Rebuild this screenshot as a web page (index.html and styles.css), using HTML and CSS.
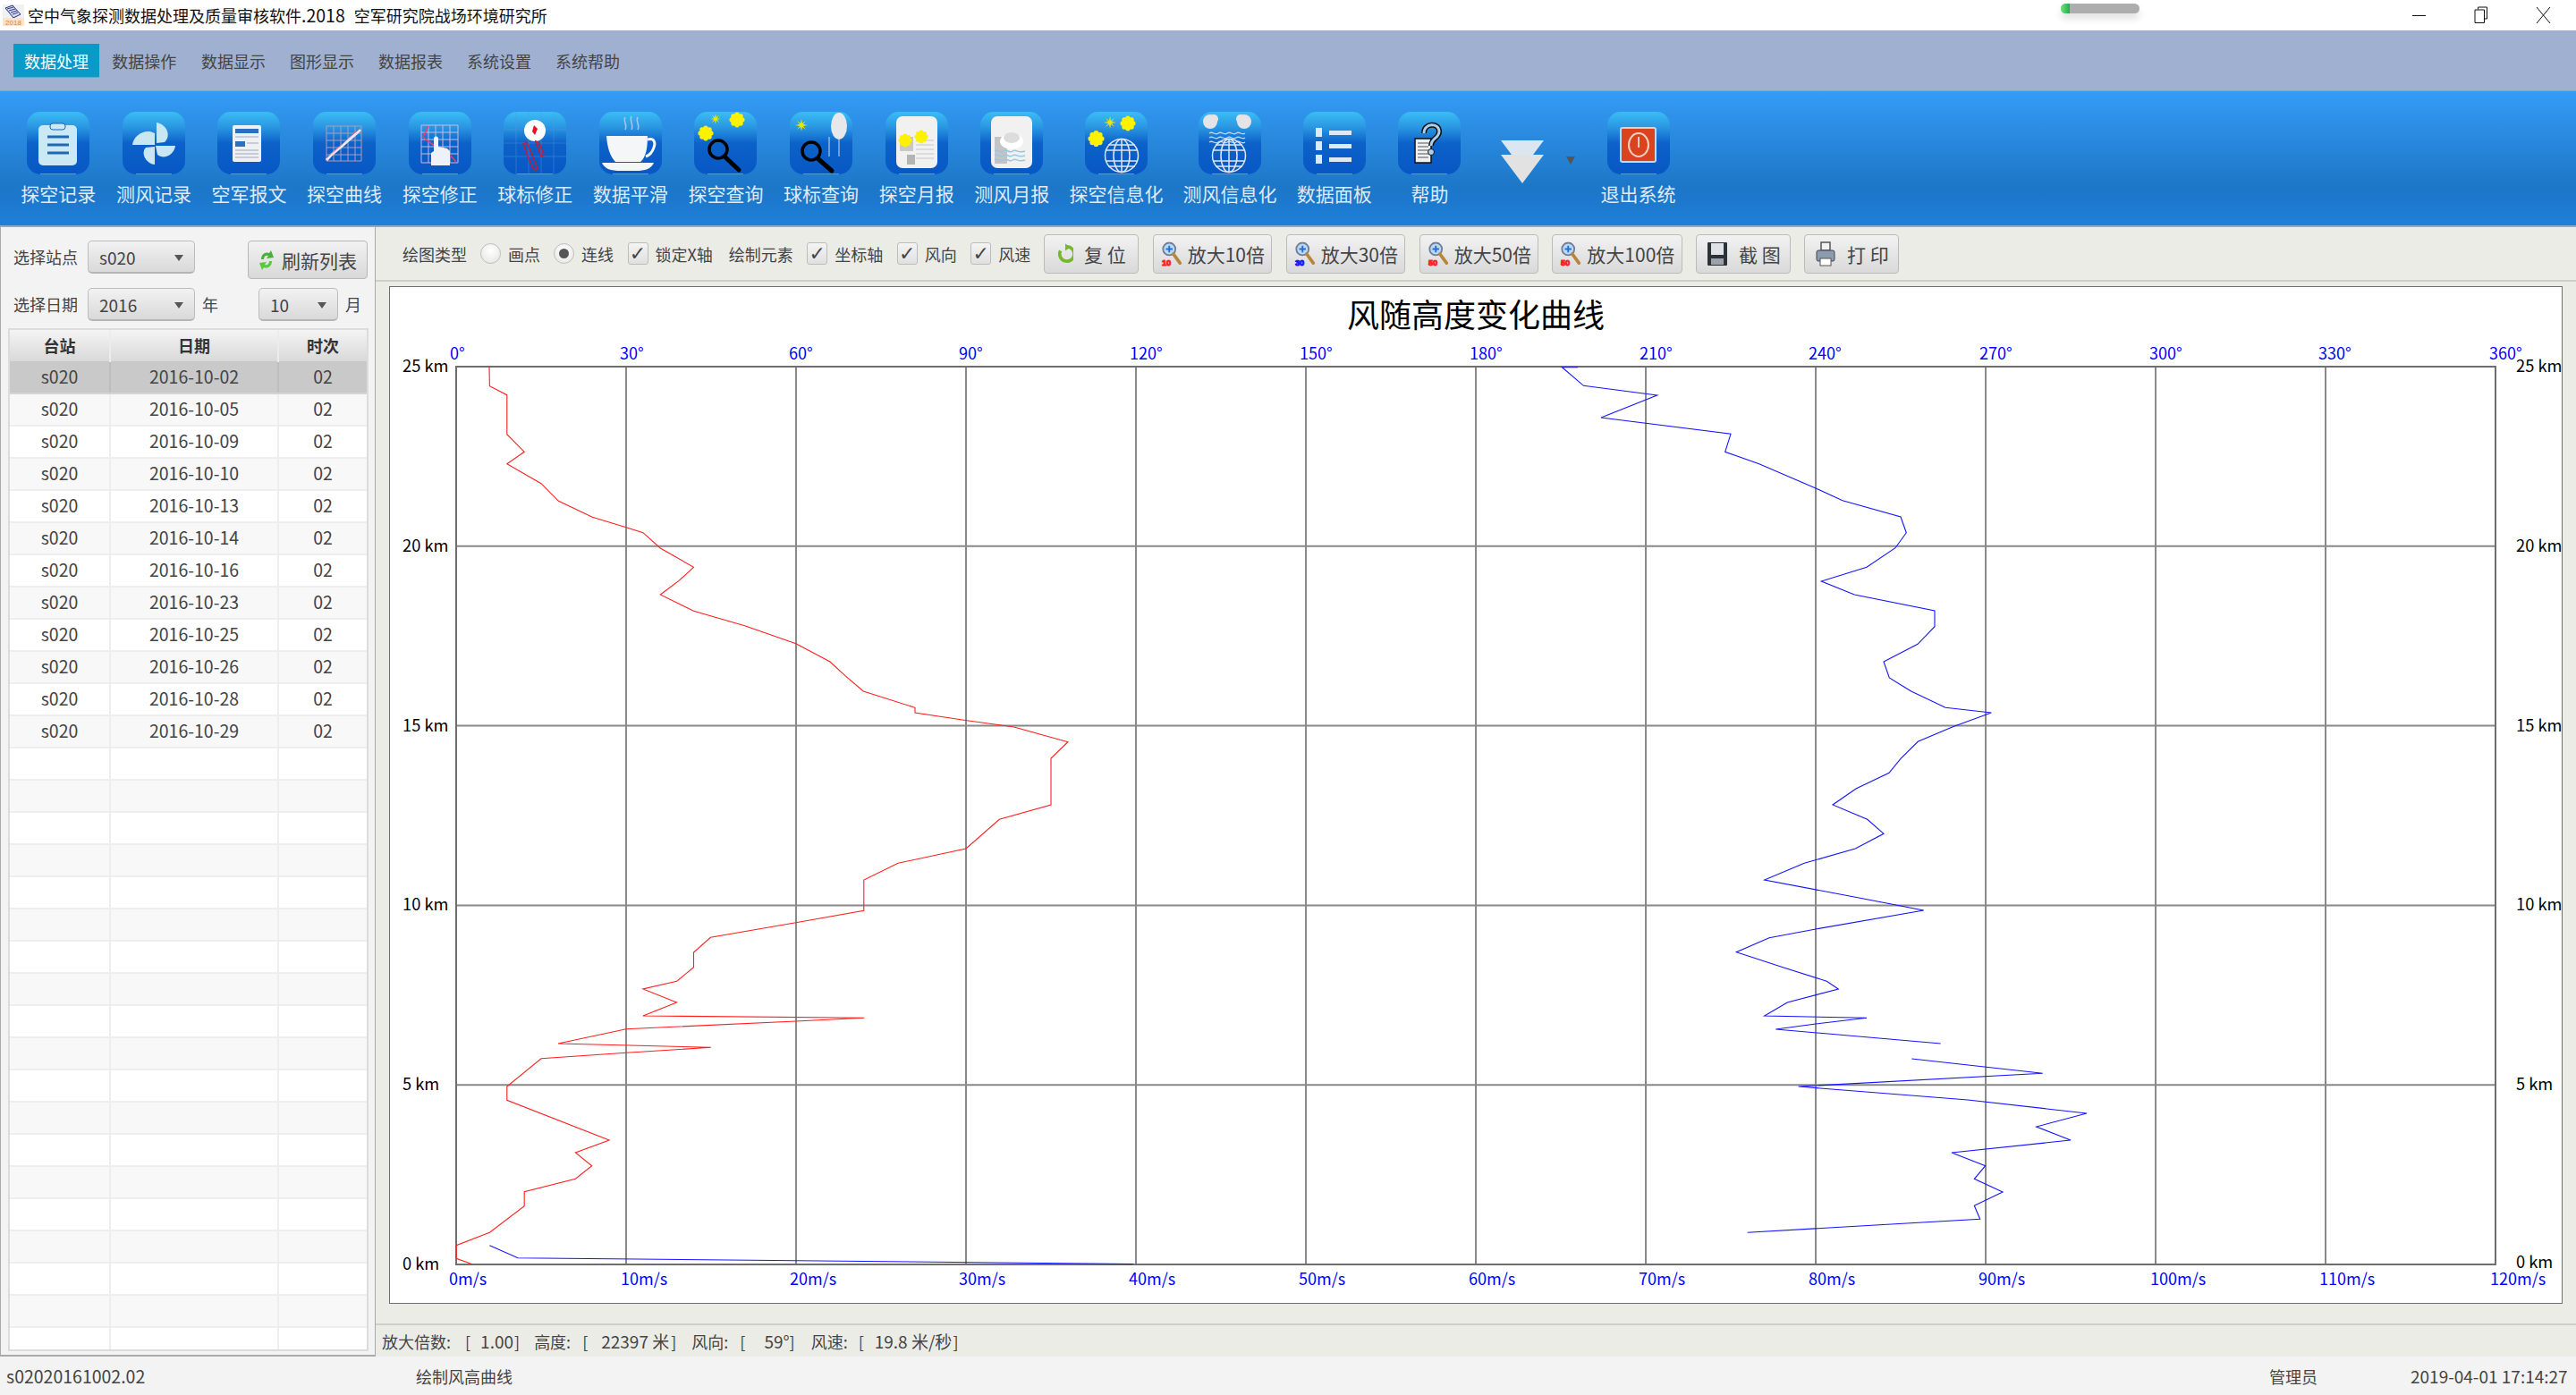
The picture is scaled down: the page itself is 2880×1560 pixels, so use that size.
FILE: index.html
```html
<!DOCTYPE html>
<html lang="zh">
<head>
<meta charset="utf-8">
<title>空中气象探测数据处理及质量审核软件</title>
<link rel="stylesheet" href="styles.css">
</head>
<body>
<svg class="defs" width="0" height="0">
  <defs>
    <linearGradient id="gi" x1="0" y1="0" x2="0" y2="1">
      <stop offset="0" stop-color="#3bbdf4"/><stop offset=".25" stop-color="#2a96e2"/><stop offset=".5" stop-color="#0c62c8"/><stop offset="1" stop-color="#0757c4"/>
    </linearGradient>
    <symbol id="tile" viewBox="0 0 70 70"><rect x="0" y="0" width="70" height="70" rx="15" fill="url(#gi)"/><path d="M15 69.5h40" stroke="#7ab7ea" stroke-width="1" opacity=".7"/></symbol>
    <symbol id="globe" viewBox="0 0 40 40"><g fill="none" stroke="#dfe6f2" stroke-width="1.5"><circle cx="20" cy="20" r="18.5"/><ellipse cx="20" cy="20" rx="9" ry="18.5"/><path d="M20 1.5v37M2 14h36M2 26h36M5 8h30M5 32h30"/></g></symbol>
    <symbol id="sun" viewBox="0 0 20 20"><g fill="#fff200"><circle cx="10" cy="10" r="7.5"/><circle cx="10" cy="3.5" r="3"/><circle cx="10" cy="16.500" r="3"/><circle cx="3.500" cy="10" r="3"/><circle cx="16.500" cy="10" r="3"/><circle cx="5.500" cy="5.500" r="3"/><circle cx="14.500" cy="5.500" r="3"/><circle cx="5.500" cy="14.500" r="3"/><circle cx="14.500" cy="14.500" r="3"/></g></symbol>
    <symbol id="star" viewBox="0 0 14 14"><path d="M7 0l1 5 4-3-3 4 5 1-5 1 3 4-4-3-1 5-1-5-4 3 3-4-5-1 5-1-3-4 4 3z" fill="#e8e800"/></symbol>
    <symbol id="zoomglass" viewBox="0 0 26 30"><circle cx="10" cy="9" r="7.500" fill="#bcd8f5" stroke="#6f7f96" stroke-width="2"/><path d="M10 5v8M6 9h8" stroke="#1f6fd8" stroke-width="2"/><path d="M15 15l8 11" stroke="#b8863a" stroke-width="4" stroke-linecap="round"/></symbol>
  </defs>
</svg>

<header class="titlebar">
  <svg class="appicon" viewBox="0 0 24 24" width="24" height="24" aria-hidden="true">
    <rect width="24" height="24" fill="#f1f1f1"/>
    <path d="M3 4l8-3 9 10-8 4z" fill="#cfd7ea" stroke="#27307c" stroke-width="1"/>
    <path d="M5 5l7-2M7 7l7-2M9 9l7-2M11 11l6-2" stroke="#27307c" stroke-width=".9"/>
    <rect y="15" width="24" height="9" fill="#fde3cc"/>
    <text x="12" y="23" class="appicon-text" text-anchor="middle">2018</text>
  </svg>
  <span class="apptitle">空中气象探测数据处理及质量审核软件<span class="ver">.2018</span></span><span class="apptitle org">空军研究院战场环境研究所</span>
  <div class="pill"><i></i></div>
  <div class="winctl">
    <svg width="16" height="16" viewBox="0 0 16 16"><path d="M0 8.500h15" stroke="#111" stroke-width="1"/></svg>
    <svg width="16" height="20" viewBox="0 0 16 20"><path d="M4.500 3.500V1h10v13H12M1 4h10.500v14.500H1z" fill="#fff" stroke="#111" stroke-width="1"/></svg>
    <svg width="17" height="20" viewBox="0 0 17 20"><path d="M1 1l15 18M16 1L1 19" stroke="#111" stroke-width="1"/></svg>
  </div>
</header>

<nav class="menubar">
  <span class="menu active">数据处理</span>
  <span class="menu">数据操作</span>
  <span class="menu">数据显示</span>
  <span class="menu">图形显示</span>
  <span class="menu">数据报表</span>
  <span class="menu">系统设置</span>
  <span class="menu">系统帮助</span>
</nav>

<section class="toolbar">
  <div class="tool"><svg class="ticon" viewBox="0 0 70 70"><use href="#tile" width="70" height="70"/><rect x="13" y="15" width="43" height="45" rx="5" fill="#cbe9f4"/><rect x="26" y="13" width="17" height="7" rx="3" fill="#cbe9f4" stroke="#1c62b0"/><path d="M23 28h24M23 37h24M23 46h24" stroke="#2168b3" stroke-width="3"/></svg><span>探空记录</span></div>
  <div class="tool"><svg class="ticon" viewBox="0 0 70 70"><use href="#tile" width="70" height="70"/><g fill="#c9e7f3"><path d="M38 35V12C49 14 55 26 47 34z"/><path d="M36 37H11C12 26 26 18 36 24z"/><path d="M37 38H59C58 48 46 54 39 48z"/><path d="M36 39V59C26 58 20 46 26 40z"/></g></svg><span>测风记录</span></div>
  <div class="tool"><svg class="ticon" viewBox="0 0 70 70"><use href="#tile" width="70" height="70"/><rect x="17" y="15" width="32" height="41" rx="2" fill="#eef0f4"/><rect x="20" y="19" width="26" height="5" fill="#2a6fc0"/><rect x="20" y="33" width="11" height="6" fill="#2a6fc0"/><path d="M20 28h26M33 35h13M20 43h26M20 47h26M20 51h26" stroke="#c8ccd4" stroke-width="2"/></svg><span>空军报文</span></div>
  <div class="tool"><svg class="ticon" viewBox="0 0 70 70"><use href="#tile" width="70" height="70"/><path d="M15 16h39v39H15zM23 16v39M31 16v39M39 16v39M47 16v39M15 24h39M15 32h39M15 40h39M15 48h39" fill="none" stroke="#b49ab8" stroke-width="1"/><path d="M15 54c8-10 14-12 20-18s10-8 18-16" fill="none" stroke="#e8e8f0" stroke-width="3"/><path d="M15 52c8-8 14-12 22-20s10-8 16-14" fill="none" stroke="#e46a86" stroke-width="1"/></svg><span>探空曲线</span></div>
  <div class="tool"><svg class="ticon" viewBox="0 0 70 70"><use href="#tile" width="70" height="70"/><path d="M14 15h41v42H14zM22 15v42M30 15v42M38 15v42M46 15v42M14 23h41M14 31h41M14 39h41M14 47h41" fill="none" stroke="#cdb8dc" stroke-width="1"/><path d="M22 16L16 28l10 8 18 10 9 10" fill="none" stroke="#f03a70" stroke-width="1.500"/><path d="M25 60v-14l3-2V30a2.500 2.500 0 0 1 5 0v9l10 2 3 3v16z" fill="#eef1f7"/></svg><span>探空修正</span></div>
  <div class="tool"><svg class="ticon" viewBox="0 0 70 70"><use href="#tile" width="70" height="70"/><path d="M0 20h70M0 35h70M0 50h70M14 0v70M28 0v70M42 0v70M56 0v70" stroke="#5c9ae0" stroke-width=".7" opacity=".6"/><circle cx="35" cy="21" r="12" fill="#fff"/><path d="M34 15l4 4-3 7-3-4z" fill="#e8101c"/><path d="M22 36l4-2 10 24 2 6-3 1-4-5zM36 33l4 2 5 13-3 2z" fill="none" stroke="#c01c3c" stroke-width="1.500"/></svg><span>球标修正</span></div>
  <div class="tool"><svg class="ticon" viewBox="0 0 70 70"><use href="#tile" width="70" height="70"/><path d="M29 6c-3 5 3 8 0 14M36 5c-3 5 3 9 0 15M43 6c-3 5 3 8 0 14" fill="none" stroke="#a6c7ea" stroke-width="1.500"/><path d="M8 27h46c0 14-2 24-8 29H18C12 50 9 40 8 27z" fill="#f4f6f8"/><path d="M54 31c8-2 9 4 7 9-2 6-6 9-9 10" fill="none" stroke="#f4f6f8" stroke-width="3"/><path d="M3 57h58c-3 7-10 9-20 9H24C13 66 6 64 3 57z" fill="#f4f6f8"/></svg><span>数据平滑</span></div>
  <div class="tool"><svg class="ticon" viewBox="0 0 70 70"><use href="#tile" width="70" height="70"/><use href="#star" x="18" y="2" width="12" height="12"/><use href="#sun" x="39" y="0" width="18" height="18"/><use href="#sun" x="3" y="15" width="20" height="18"/><circle cx="27" cy="42" r="10" fill="none" stroke="#000" stroke-width="3.500"/><path d="M34 50l16 15" stroke="#000" stroke-width="5" stroke-linecap="round"/></svg><span>探空查询</span></div>
  <div class="tool"><svg class="ticon" viewBox="0 0 70 70"><use href="#tile" width="70" height="70"/><use href="#star" x="6" y="8" width="14" height="14"/><ellipse cx="55" cy="16" rx="9" ry="15" fill="#e6e8ec"/><path d="M44 28v22M55 30v20" stroke="#d6d8de" stroke-width="1"/><circle cx="24" cy="44" r="10" fill="none" stroke="#000" stroke-width="3.500"/><path d="M31 52l16 14" stroke="#000" stroke-width="5" stroke-linecap="round"/></svg><span>球标查询</span></div>
  <div class="tool"><svg class="ticon" viewBox="0 0 70 70"><use href="#tile" width="70" height="70"/><rect x="12" y="5" width="46" height="58" rx="7" fill="#f1f1f1"/><path d="M34 32h20M34 37h20M34 42h20M34 47h20M34 52h20" stroke="#c6c6c6"/><rect x="16" y="28" width="15" height="16" fill="#c8c8c8"/><rect x="24" y="48" width="9" height="11" fill="#b4b4b4"/><use href="#sun" x="14" y="24" width="16" height="16"/><use href="#sun" x="32" y="20" width="16" height="16"/></svg><span>探空月报</span></div>
  <div class="tool"><svg class="ticon" viewBox="0 0 70 70"><use href="#tile" width="70" height="70"/><rect x="12" y="5" width="46" height="58" rx="7" fill="#f1f1f1"/><rect x="16" y="28" width="14" height="30" fill="#c4c4c4"/><ellipse cx="35" cy="33" rx="13" ry="9" fill="#fff"/><ellipse cx="35" cy="29" rx="9" ry="6" fill="#dcdcdc"/><path d="M16 44c4-3 6 3 10 0s6 3 10 0 6 3 14 0M16 49c4-3 6 3 10 0s6 3 10 0 6 3 14 0M16 54c4-3 6 3 10 0s6 3 10 0 6 3 14 0" fill="none" stroke="#9bc7de" stroke-width="1.500"/></svg><span>测风月报</span></div>
  <div class="tool wide"><svg class="ticon" viewBox="0 0 70 70"><use href="#tile" width="70" height="70"/><use href="#star" x="21" y="4" width="14" height="16"/><use href="#sun" x="39" y="3" width="18" height="20"/><use href="#sun" x="3" y="20" width="19" height="20"/><use href="#globe" x="21" y="29" width="40" height="40"/></svg><span>探空信息化</span></div>
  <div class="tool wide"><svg class="ticon" viewBox="0 0 70 70"><use href="#tile" width="70" height="70"/><g fill="#e4e4e6"><circle cx="13" cy="11" r="8"/><circle cx="51" cy="11" r="8"/><circle cx="17" cy="8" r="5"/><circle cx="47" cy="8" r="5"/></g><path d="M12 24c4-3 6 3 10 0s6 3 10 0 6 3 10 0 6 3 10 0M12 29c4-3 6 3 10 0s6 3 10 0 6 3 10 0 6 3 10 0M12 34c4-3 6 3 10 0s6 3 10 0 6 3 10 0 6 3 10 0" fill="none" stroke="#bad6f0" stroke-width="1.300"/><use href="#globe" x="14" y="29" width="40" height="40"/></svg><span>测风信息化</span></div>
  <div class="tool"><svg class="ticon" viewBox="0 0 70 70"><use href="#tile" width="70" height="70"/><g fill="#dfe9f6"><rect x="14" y="18" width="7" height="10"/><rect x="14" y="33" width="7" height="10"/><rect x="14" y="48" width="7" height="10"/><rect x="29" y="21" width="25" height="5"/><rect x="29" y="36" width="25" height="5"/><rect x="29" y="51" width="25" height="5"/></g></svg><span>数据面板</span></div>
  <div class="tool"><svg class="ticon" viewBox="0 0 70 70"><use href="#tile" width="70" height="70"/><rect x="19" y="30" width="18" height="27" fill="#eef0f2" stroke="#111" stroke-width="1.500"/><path d="M22 35h12M22 39h12M22 43h12M22 47h12M22 51h12" stroke="#555"/><path d="M29 24c0-12 17-12 17-2 0 8-9 7-9 16" fill="none" stroke="#111" stroke-width="6"/><path d="M29 24c0-12 17-12 17-2 0 8-9 7-9 16" fill="none" stroke="#a9d0ee" stroke-width="3"/><circle cx="37" cy="45" r="3.500" fill="#a9d0ee" stroke="#111"/></svg><span>帮助</span></div>
  <div class="arrows">
    <svg viewBox="0 0 48 48" width="48" height="48"><path d="M0 0h48L24 32z" fill="#dbe6f0"/><path d="M0 16h48L24 48z" fill="#e2e2e2"/></svg>
    <i class="dropcaret"></i>
  </div>
  <div class="tool"><svg class="ticon" viewBox="0 0 70 70"><use href="#tile" width="70" height="70"/><rect x="15" y="18" width="39" height="38" rx="2" fill="#d9431d" stroke="#c9d6de" stroke-width="2"/><ellipse cx="35" cy="37" rx="11" ry="13" fill="none" stroke="#f4cfc3" stroke-width="2"/><path d="M35 28v12" stroke="#f4cfc3" stroke-width="2"/></svg><span>退出系统</span></div>
</section>

<main class="main">
  <aside class="side">
    <div class="side-row first">
      <span class="lbl">选择站点</span>
      <span class="combo">s020</span>
      <button class="refresh"><svg viewBox="0 0 18 24" width="18" height="24"><path d="M3 11C3 5 8 2 12 4l2-3 3 8-8 1 2-3C8 6 6 8 6 11z" fill="#3cb92c"/><path d="M15 13c0 6-5 9-9 7l-2 3-3-8 8-1-2 3c3 1 5-1 5-4z" fill="#58c83c"/></svg>刷新列表</button>
    </div>
    <div class="side-row second">
      <span class="lbl">选择日期</span>
      <span class="combo">2016</span>
      <span class="unit">年</span>
      <span class="combo short">10</span>
      <span class="unit tail">月</span>
    </div>
    <div class="tablewrap">
      <table class="grid">
        <colgroup><col class="c1"><col class="c2"><col class="c3"></colgroup>
        <thead><tr><th>台站</th><th>日期</th><th>时次</th></tr></thead>
        <tbody>
          <tr class="sel"><td>s020</td><td>2016-10-02</td><td>02</td></tr>
          <tr><td>s020</td><td>2016-10-05</td><td>02</td></tr>
          <tr><td>s020</td><td>2016-10-09</td><td>02</td></tr>
          <tr><td>s020</td><td>2016-10-10</td><td>02</td></tr>
          <tr><td>s020</td><td>2016-10-13</td><td>02</td></tr>
          <tr><td>s020</td><td>2016-10-14</td><td>02</td></tr>
          <tr><td>s020</td><td>2016-10-16</td><td>02</td></tr>
          <tr><td>s020</td><td>2016-10-23</td><td>02</td></tr>
          <tr><td>s020</td><td>2016-10-25</td><td>02</td></tr>
          <tr><td>s020</td><td>2016-10-26</td><td>02</td></tr>
          <tr><td>s020</td><td>2016-10-28</td><td>02</td></tr>
          <tr><td>s020</td><td>2016-10-29</td><td>02</td></tr>
          <tr><td></td><td></td><td></td></tr><tr><td></td><td></td><td></td></tr><tr><td></td><td></td><td></td></tr><tr><td></td><td></td><td></td></tr>
          <tr><td></td><td></td><td></td></tr><tr><td></td><td></td><td></td></tr><tr><td></td><td></td><td></td></tr><tr><td></td><td></td><td></td></tr>
          <tr><td></td><td></td><td></td></tr><tr><td></td><td></td><td></td></tr><tr><td></td><td></td><td></td></tr><tr><td></td><td></td><td></td></tr>
          <tr><td></td><td></td><td></td></tr><tr><td></td><td></td><td></td></tr><tr><td></td><td></td><td></td></tr><tr><td></td><td></td><td></td></tr>
          <tr><td></td><td></td><td></td></tr><tr><td></td><td></td><td></td></tr><tr><td></td><td></td><td></td></tr>
        </tbody>
      </table>
    </div>
  </aside>

  <div class="content">
    <div class="controls">
      <span class="ctl">绘图类型</span>
      <span class="radio"></span><span class="ctl t">画点</span>
      <span class="radio on"></span><span class="ctl t">连线</span>
      <span class="check">✓</span><span class="ctl t">锁定X轴</span>
      <span class="ctl group">绘制元素</span>
      <span class="check">✓</span><span class="ctl t">坐标轴</span>
      <span class="check">✓</span><span class="ctl t">风向</span>
      <span class="check">✓</span><span class="ctl t">风速</span>
      <button class="btn w106"><svg viewBox="0 0 20 26" width="18" height="26"><path d="M12 4a9 9 0 1 1-8 5" fill="none" stroke="#76b82a" stroke-width="4"/><path d="M10 0v9l6-4z" fill="#76b82a"/></svg><span class="sp">复 位</span></button>
      <button class="btn w133"><svg viewBox="0 0 26 30" width="24" height="30"><use href="#zoomglass" width="26" height="30"/><text x="1" y="29" class="mini red">10</text></svg>放大10倍</button>
      <button class="btn w133"><svg viewBox="0 0 26 30" width="24" height="30"><use href="#zoomglass" width="26" height="30"/><text x="1" y="29" class="mini blue">30</text></svg>放大30倍</button>
      <button class="btn w133"><svg viewBox="0 0 26 30" width="24" height="30"><use href="#zoomglass" width="26" height="30"/><text x="1" y="29" class="mini red">50</text></svg>放大50倍</button>
      <button class="btn w146"><svg viewBox="0 0 26 30" width="24" height="30"><use href="#zoomglass" width="26" height="30"/><text x="1" y="29" class="mini red">50</text></svg>放大100倍</button>
      <button class="btn w106"><svg viewBox="0 0 24 28" width="24" height="28"><rect x="1" y="1" width="22" height="26" rx="1" fill="#2c3238"/><rect x="5" y="2" width="14" height="13" fill="#dfe3e8"/><rect x="5" y="19" width="14" height="7" fill="#9aa2aa"/></svg><span class="sp">截 图</span></button>
      <button class="btn w106"><svg viewBox="0 0 24 30" width="24" height="30"><rect x="7" y="2" width="10" height="9" fill="#f2f2f2" stroke="#555" stroke-width="1.500"/><rect x="2" y="11" width="20" height="12" rx="2" fill="#8d9bb0" stroke="#444"/><rect x="6" y="20" width="12" height="8" fill="#fff" stroke="#555"/></svg><span class="sp">打 印</span></button>
    </div>

    <div class="plotarea">
      <svg class="plot" viewBox="435 320 2430 1138" width="2430" height="1138">
        <text x="1650" y="366" text-anchor="middle" class="ptitle">风随高度变化曲线</text>

        <g class="grid-v">
          <path d="M700 410V1414M890 410V1414M1080 410V1414M1270 410V1414M1460 410V1414M1650 410V1414M1840 410V1414M2030 410V1414M2220 410V1414M2410 410V1414M2600 410V1414"/>
        </g>
        <g class="grid-h">
          <path d="M510 610.800H2790M510 811.600H2790M510 1012.400H2790M510 1213.200H2790"/>
        </g>
        <rect x="510" y="410" width="2280" height="1004" class="axis"/>

        <polyline class="red" points="547,410 547.400,431.700 566.800,441.700 566.800,485.700 586.200,505.300 566.800,518.700 605,540.700 624.500,560.300 662.200,578.300 700,589.700 718.900,595.700 738.300,613 775.500,634.300 758.700,649.700 738.300,665 775.500,683.300 832.600,699.700 889.800,719.700 928,740 944.900,755.700 965.300,773 1023,791.300 1023,797 1077.600,805.300 1133.700,813 1193.900,829.700 1175,848 1175,900 1117.300,916.300 1080,949 1004,965.300 965.800,984 965.800,1018.300 889.800,1031.700 794.400,1048.300 775.500,1065 775.500,1081.700 756.600,1097.300 718.900,1106 756.600,1121 718.900,1136 966.300,1138.300 889.800,1142 700,1150.700 624,1167 794.900,1171.300 700,1177.300 605,1183.700 566.800,1215 566.800,1230.300 681.100,1275 643.400,1289 661.700,1303.700 643.400,1318.300 586.200,1332.700 586.200,1348.700 547.400,1378.300 510.200,1392.700 510.200,1407.300 528,1413.700"/>

        <polyline class="blue" points="1764,410.700 1746.400,410.700 1770.500,431.300 1852.700,442 1790,467 1935,485.300 1928.700,505.300 1966.700,518.700 2030,546 2060,559.700 2125,578 2131.300,595.700 2119,612.700 2087,634.300 2036.300,650 2073.300,665 2163,683 2163,700.700 2144,720.300 2106,740 2112.300,758 2136.700,773 2175,791.300 2226.300,797 2183.300,812.700 2144.300,829.300 2125,848.300 2112,864.300 2075,882 2049,900 2087.700,916.300 2106,932.300 2074.300,949 2017.300,965.300 1972.700,984 2074.300,1003.300 2150.700,1018 2030,1039 1978,1048.700 1941.300,1064.700 1993.300,1081.700 2042.300,1097.300 2055.300,1106 1998.300,1121 1972.700,1136 2087,1138.300 2030,1145 1985.300,1151 2169.700,1167"/>
        <polyline class="blue" points="2137.300,1184 2283.700,1200.300 2010.700,1215 2200,1230 2333,1245 2276.700,1260 2315,1275 2182,1289 2219.700,1303.700 2207.300,1318.300 2239,1333 2207.300,1348.300 2213.700,1363.300 1953.700,1378.300"/>
        <polyline class="blue" points="547.400,1392.700 579,1406.700 1267,1413.500"/>

        <g class="lb">
          <text x="503" y="402">0°</text><text x="693" y="402">30°</text><text x="882" y="402">60°</text><text x="1072" y="402">90°</text>
          <text x="1263" y="402">120°</text><text x="1453" y="402">150°</text><text x="1643" y="402">180°</text><text x="1833" y="402">210°</text>
          <text x="2022" y="402">240°</text><text x="2213" y="402">270°</text><text x="2403" y="402">300°</text><text x="2592" y="402">330°</text><text x="2783" y="402">360°</text>
          <text x="502" y="1437">0m/s</text><text x="694" y="1437">10m/s</text><text x="883" y="1437">20m/s</text><text x="1072" y="1437">30m/s</text>
          <text x="1262" y="1437">40m/s</text><text x="1452" y="1437">50m/s</text><text x="1642" y="1437">60m/s</text><text x="1832" y="1437">70m/s</text>
          <text x="2022" y="1437">80m/s</text><text x="2212" y="1437">90m/s</text><text x="2404" y="1437">100m/s</text><text x="2593" y="1437">110m/s</text><text x="2784" y="1437">120m/s</text>
        </g>
        <g class="km">
          <text x="450" y="416">25 km</text><text x="450" y="617">20 km</text><text x="450" y="818">15 km</text><text x="450" y="1018">10 km</text><text x="450" y="1219">5 km</text><text x="450" y="1420">0 km</text>
          <text x="2813" y="416">25 km</text><text x="2813" y="617">20 km</text><text x="2813" y="818">15 km</text><text x="2813" y="1018">10 km</text><text x="2813" y="1219">5 km</text><text x="2813" y="1418">0 km</text>
        </g>
      </svg>
    </div>

    <div class="info">
      <span class="f1">放大倍数:</span><span class="f2">[</span><span class="f3 n">1.00</span><span class="f4">]</span>
      <span class="f5">高度:</span><span class="f6">[</span><span class="f7 n">22397 米</span><span class="f8">]</span>
      <span class="f9">风向:</span><span class="f10">[</span><span class="f11 n">59°</span><span class="f12">]</span>
      <span class="f13">风速:</span><span class="f14">[</span><span class="f15 n">19.8 米/秒</span><span class="f16">]</span>
    </div>
  </div>
</main>

<footer class="statusbar">
  <span class="s1">s02020161002.02</span>
  <span class="s2">绘制风高曲线</span>
  <span class="s3">管理员</span>
  <span class="s4">2019-04-01 17:14:27</span>
</footer>
</body>
</html>
```
FILE: styles.css
```css
* { box-sizing: border-box; }
html, body { margin: 0; padding: 0; }
body {
  width: 2880px;
  height: 1560px;
  overflow: hidden;
  display: flex;
  flex-direction: column;
  font-family: "Noto Sans CJK SC", "Noto Sans", sans-serif;
  font-size: 18px;
  color: #444;
  background: #ecece7;
}
.defs { position: absolute; }

/* title bar */
.titlebar { height: 34px; background: #fff; display: flex; align-items: center; padding-left: 3px; position: relative; flex: none; }
.appicon { flex: none; margin-top: 0; }
.appicon-text { font: 8px "Liberation Sans", sans-serif; fill: #f07a2a; }
.apptitle { margin-left: 4px; color: #111; line-height: 34px; white-space: nowrap; }
.apptitle.org { margin-left: 10px; }
.ver { font-size: 19.500px; }
.pill { position: absolute; left: 2304px; top: 4px; width: 88px; height: 11px; border-radius: 6px; background: #adadad; box-shadow: 0 6px 8px rgba(0,0,0,.12); overflow: hidden; }
.pill i { display: block; width: 10px; height: 100%; background: linear-gradient(90deg, #6ee27e, #1fae4c); }
.winctl { margin-left: auto; display: flex; align-items: center; padding-right: 28px; gap: 53px; }
.winctl svg { display: block; }

/* menu */
.menubar { height: 68px; background: #a0b0d0; border-bottom: 1px solid #8aa4cc; display: flex; align-items: flex-start; padding: 15px 0 0 15px; flex: none; }
.menu { width: 99px; height: 38px; line-height: 38px; text-align: center; white-space: nowrap; color: #444; margin-right: 0; flex: none; }
.menu.active { width: 96px; margin-right: 0; background: #0a9ac8; border-bottom: 1px solid #55add0; color: #f4fbff; }
.menu:nth-child(2) { width: 100.500px; }

/* icon toolbar */
.toolbar {
  height: 152px;
  flex: none;
  display: flex;
  padding-left: 12px;
  background: linear-gradient(#359cf7 0, #2d8fe6 35px, #1d77c8 106px, #1c78cc 120px, #1f7fd8 100%);
  border-bottom: 2px solid #8fa9c6;
}
.tool { width: 106.6px; flex: none; display: flex; flex-direction: column; align-items: center; padding-top: 23px; color: #dfeaf5; font-size: 21px; line-height: 30px; white-space: nowrap; }
.tool.wide { width: 127px; }
.tool span { margin-top: 6px; }
.ticon { width: 70px; height: 70px; display: block; flex: none; }
.arrows { width: 126.500px; flex: none; display: flex; align-items: flex-start; padding: 55px 0 0 26px; }
.dropcaret { width: 0; height: 0; margin: 18px 0 0 25px; border: 5px solid transparent; border-top: 9px solid #555; border-bottom: 0; }

/* main */
.main { flex: 1; min-height: 0; display: flex; }
.side { width: 420px; flex: none; background: #f3f3f3; border-left: 1px solid #aaa; border-right: 1px solid #aaa; border-bottom: 2px solid #aaa; }
.side-row { display: flex; align-items: flex-start; padding-left: 14px; }
.side-row.first { margin-top: 15px; height: 43px; }
.side-row.second { margin-top: 10px; height: 37px; }
.lbl { width: 73px; height: 37px; line-height: 37px; white-space: nowrap; margin-right: 10px; flex: none; }
.combo { width: 120px; height: 37px; line-height: 35px; padding-left: 12px; font-size: 19px; flex: none; border: 1px solid #bdbdbd; border-bottom: 2px solid #b5b5b5; border-radius: 5px; background: linear-gradient(#f2f2f2, #d9d9d9); position: relative; }
.combo::after { content: ""; position: absolute; right: 12px; top: 15px; border: 5.500px solid transparent; border-top: 7px solid #555; border-bottom: 0; }
.combo.short { width: 89px; margin-left: 19px; }
.unit { width: 44px; line-height: 37px; margin-left: 8px; flex: none; }
.unit.tail { width: 24px; }
.refresh { width: 134px; height: 43px; margin-left: 59px; padding: 0; flex: none; display: flex; align-items: center; justify-content: center; gap: 8px; font: inherit; font-size: 21px; color: #444; border: 1px solid #b8b8b8; border-radius: 4px; background: linear-gradient(#f2f2f2, #d8d8d8); }

.tablewrap { margin: 8px 0 0 8px; width: 403px; height: 1144px; border: 2px solid #dcdcdc; overflow: hidden; background: #fff; }
.grid { border-collapse: collapse; table-layout: fixed; width: 400px; }
.c1 { width: 112px; } .c2 { width: 188px; } .c3 { width: 100px; }
.grid th { height: 35px; padding: 0; font-weight: 700; color: #333; background: linear-gradient(#f4f4f4, #d9d9d9); border-right: 2px solid #ececec; border-bottom: 1px solid #c8c8c8; line-height: 28px; }
.grid td { height: 36px; padding: 0 0 2px; font-size: 19.500px; text-align: center; border-right: 2px solid #eee; border-bottom: 2px solid #eee; line-height: 28px; }
.grid tbody tr:nth-child(even) { background: #f8f8f8; }
.grid tbody tr:nth-child(odd) { background: #fff; }
.grid tbody tr.sel { background: #c9c9c9; }
.grid tr.sel td { border-color: #bebebe; border-bottom-color: #d4d4d4; }

/* right */
.content { flex: 1; min-width: 0; display: flex; flex-direction: column; }
.controls { height: 61px; flex: none; display: flex; align-items: center; padding: 0 0 0 30px; border-bottom: 2px solid #cfcfca; }
.ctl { white-space: nowrap; flex: none; font-size: 18px; color: #444; }
.ctl.t { margin-left: 8px; }
.ctl.group { margin-left: 18px; }
.radio { width: 23px; height: 23px; margin-left: 15px; border-radius: 50%; border: 1px solid #bdbdbd; background: radial-gradient(circle at 50% 35%, #fff, #e3e3e3); flex: none; position: relative; }
.radio.on::after { content: ""; position: absolute; left: 5px; top: 5px; width: 11px; height: 11px; border-radius: 50%; background: #555; }
.check { width: 23px; height: 25px; margin-left: 15.500px; border: 1px solid #bdbdbd; border-radius: 3px; background: linear-gradient(#f4f4f4, #e0e0e0); flex: none; text-align: center; font: 22px/23px "DejaVu Sans", sans-serif; color: #444; overflow: hidden; }
.btn { height: 44px; margin-left: 15px; padding: 0; flex: none; display: flex; align-items: center; justify-content: center; gap: 6px; font: inherit; font-size: 21px; color: #444; white-space: nowrap; border: 1px solid #bbb; border-radius: 4px; background: linear-gradient(#f2f2f2, #d9d9d9); }
.ctl + .btn { margin-left: 15px; }
.sp { margin-left: 6px; }
.w106 { width: 106px; }
.w133 { width: 133px; margin-left: 16px; }
.w146 { width: 146px; margin-left: 15px; }
.mini { font: 700 10px "Liberation Sans", sans-serif; }
.mini.red { fill: #d9303c; }
.mini.blue { fill: #3a3ae0; }

.plotarea { flex: 1; min-height: 0; padding: 5px 0 0 15px; }
.plot { display: block; background: #fff; outline: 1px solid #6e6e6e; outline-offset: -1px; }
.ptitle { font-size: 36px; fill: #000; }
.grid-v path { fill: none; stroke: #8a8a8a; stroke-width: 2; }
.grid-h path { fill: none; stroke: #888; stroke-width: 2; }
.axis { fill: none; stroke: #6e6e6e; stroke-width: 2; }
.red { fill: none; stroke: #ff1f1f; stroke-width: 1.100; }
.blue { fill: none; stroke: #1414ff; stroke-width: 1.100; }
.lb text { font-size: 18px; fill: #0000ff; }
.km text { font-size: 18.300px; fill: #000; }

.info { height: 37px; flex: none; display: flex; align-items: center; border-top: 2px solid #cfcfca; padding-left: 7px; font-size: 18px; color: #444; white-space: nowrap; }
.n { font-size: 19px; }
.f2 { margin-left: 16px; } .f3 { margin-left: 11px; } .f4 { margin-left: 1px; }
.f5 { margin-left: 16px; } .f6 { margin-left: 13px; } .f7 { margin-left: 15px; } .f8 { margin-left: 2px; }
.f9 { margin-left: 17px; } .f10 { margin-left: 13px; } .f11 { margin-left: 21px; } .f12 { margin-left: 0; }
.f13 { margin-left: 18px; } .f14 { margin-left: 12px; } .f15 { margin-left: 12px; } .f16 { margin-left: 1px; }

/* status */
.statusbar { height: 43px; flex: none; background: #f3f3f3; display: flex; align-items: center; font-size: 18px; color: #444; white-space: nowrap; }
.s1 { margin-left: 7px; width: 458px; font-size: 19.500px; }
.s2 { flex: 1; }
.s3 { width: 158px; }
.s4 { width: 185px; font-size: 19px; }
```
